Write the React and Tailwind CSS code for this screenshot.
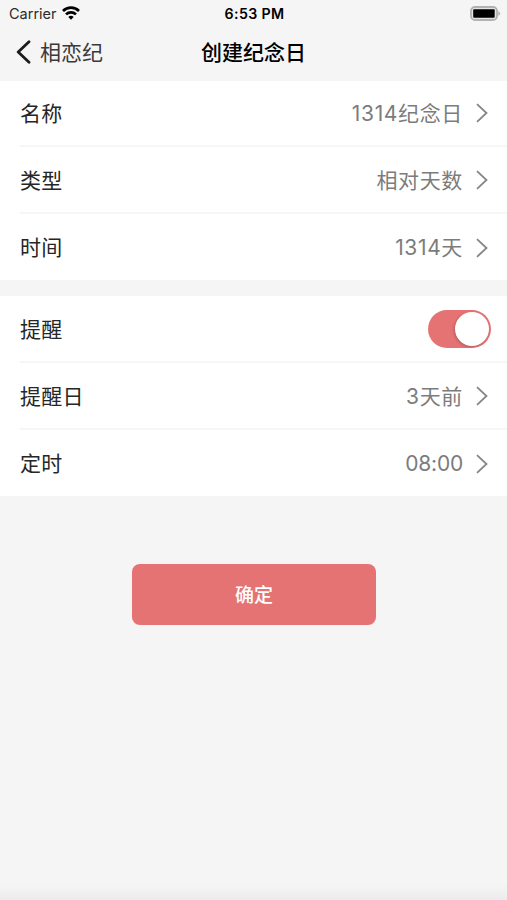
import React from "react";

function StatusBar() {
  return (
    <div className="flex h-7 items-center justify-between pl-[9px] pr-[6px] text-black">
      <div className="flex w-[100px] items-center gap-[5px]">
        <span className="text-[14.5px] leading-7 text-[#2a2a2a]">Carrier</span>
        <svg width="18" height="14" viewBox="0 0 18 14" fill="none" stroke="#000" strokeWidth="2.7" className="-mt-[2px]">
          <path d="M1 5 C5.5 .6 12.5 .6 17 5" />
          <path d="M4 8.4 C6.8 5.7 11.2 5.7 14 8.4" />
          <path d="M6.3 10.9 Q9 8.6 11.7 10.9 L9 13.7 Z" fill="#000" stroke="none" />
        </svg>
      </div>
      <span className="-ml-px text-[14.2px] font-semibold leading-7 tracking-[0.35px]">6:53 PM</span>
      <div className="flex w-[100px] justify-end">
        <svg width="31" height="15" viewBox="0 0 31 15" className="-mt-[2px]">
          <rect x="1" y="1" width="26" height="13" rx="4" fill="#e4e4e4" stroke="#b2b2b2" strokeWidth="1.8" />
          <rect x="3.2" y="3.2" width="21.5" height="8.6" rx="1" fill="#000" />
          <path d="M28.3 5 Q32 7.5 28.3 10 Z" fill="#b2b2b2" />
        </svg>
      </div>
    </div>
  );
}

function NavBar() {
  return (
    <div className="grid h-[53px] grid-cols-[1fr_auto_1fr] items-center pb-[3px] pl-4">
      <div className="flex items-center gap-[9px]">
        <svg width="15" height="24" viewBox="0 0 15 24" fill="none" stroke="#1c1c1c" strokeWidth="2.8" strokeLinecap="round" strokeLinejoin="round" className="-mt-[2px]">
          <path d="M13 1.8 L2.2 12 L13 22.2" />
        </svg>
        <span className="text-[21px] text-[#3a3a3a]">相恋纪</span>
      </div>
      <h1 className="-ml-4 text-[21px] font-medium text-black">创建纪念日</h1>
    </div>
  );
}

function Chevron() {
  return (
    <svg width="12" height="20" viewBox="0 0 12 20" fill="none" stroke="#858585" strokeWidth="1.8">
      <path d="M1 1.2 L10.5 10 L1 18.8" />
    </svg>
  );
}

function Toggle() {
  return (
    <div className="flex h-[38px] w-[63px] items-center justify-end rounded-full bg-[#e57373] pr-[2px]">
      <div className="size-[34px] rounded-full bg-white shadow-[-1px_1px_3px_rgba(0,0,0,0.2)]" />
    </div>
  );
}

function Row({ label, value, first, last, numeric, children }) {
  return (
    <div className={`ml-5 flex items-center justify-between pr-[19px] ${first ? "h-[66px]" : "h-[67px]"} ${last ? "" : "border-b-2 border-[#f6f6f6]"}`}>
      <span className={`text-[21px] tracking-[0.3px] text-[#262626] ${first || last ? "pt-px" : "pt-[3px]"}`}>{label}</span>
      {children || (
        <div className="flex items-center gap-[13px]">
          <span className={`text-[21px] text-[#7c7c7c] ${first || last ? "pt-px" : "pt-[2px]"} ${numeric ? "tracking-[-0.2px]" : "tracking-[0.65px]"}`}>{value}</span>
          <Chevron />
        </div>
      )}
    </div>
  );
}

export default function App() {
  return (
    <div className="flex h-[900px] w-[507px] flex-col overflow-hidden bg-[#f5f5f5] font-['Inter','Noto_Sans_CJK_SC',sans-serif]">
      <StatusBar />
      <NavBar />
      <section className="h-[199px] bg-white">
        <Row label="名称" value="1314纪念日" first />
        <Row label="类型" value="相对天数" />
        <Row label="时间" value="1314天" last />
      </section>
      <section className="mt-4 h-[200px] bg-white">
        <Row label="提醒">
          <div className="-mr-[3px]"><Toggle /></div>
        </Row>
        <Row label="提醒日" value="3天前" />
        <Row label="定时" value="08:00" last numeric />
      </section>
      <button className="ml-[132px] mt-[68px] h-[61px] w-[244px] rounded-lg bg-[#e57373] pt-[3px] text-[19px] font-medium text-white">确定</button>
      <div className="mt-auto h-4 bg-gradient-to-b from-[#f5f5f5] to-[#ececec]" />
    </div>
  );
}
